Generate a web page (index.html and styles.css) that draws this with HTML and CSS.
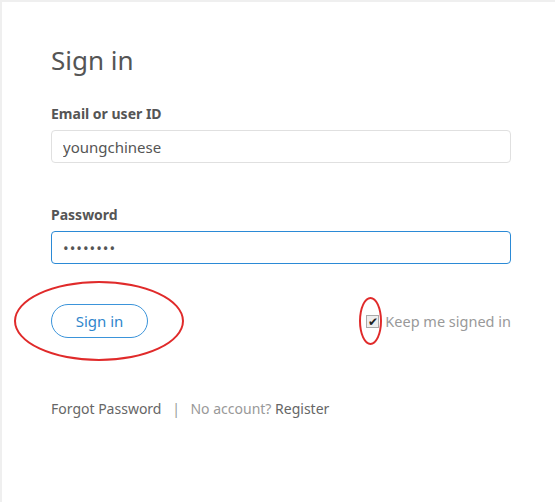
FILE: index.html
```html
<!DOCTYPE html>
<html lang="en">

<head>
    <meta charset="UTF-8">
    <meta name="viewport" content="width=device-width, initial-scale=1.0">
    <title>Sign in</title>
    <link rel="stylesheet" href="styles.css">
</head>

<body>
    <div class="card">
        <h1 class="title">Sign in</h1>

        <label class="field-label" for="user-id">Email or user ID</label>
        <input type="text" id="user-id" class="field" value="youngchinese">

        <label class="field-label" for="password">Password</label>
        <input type="password" id="password" class="field field-focus" value="password">

        <div class="actions">
            <div class="mark-wrap">
                <button class="signin-btn">Sign in</button>
                <span class="mark mark-btn"></span>
            </div>
            <label class="keep">
                <span class="mark-wrap">
                    <span class="keep-box">&#10004;</span>
                    <span class="mark mark-box"></span>
                </span>
                Keep me signed in
            </label>
        </div>

        <div class="links">
            <a href="#" class="link">Forgot Password</a>
            <span class="sep">|</span>
            <span class="muted">No account?</span>
            <a href="#" class="link">Register</a>
        </div>
    </div>
</body>

</html>
```

FILE: styles.css
```css
body {
    margin: 0;
    padding: 0;
    background-color: #efefef;
    font-family: 'Noto Sans', 'Open Sans', sans-serif;
    color: #555;
}

.card {
    background-color: white;
    margin: 2px 0 0 2px;
    min-height: 500px;
    padding: 38px 44px 0 49px;
    box-sizing: border-box;
}

.title {
    font-size: 26px;
    font-weight: normal;
    color: #555;
    margin: 0 0 24px 0;
    line-height: 40px;
}

.field-label {
    display: block;
    font-size: 14px;
    font-weight: bold;
    color: #555;
    line-height: 20px;
    margin-bottom: 6px;
}

.field {
    display: block;
    width: 100%;
    box-sizing: border-box;
    height: 33px;
    padding: 0 11px;
    border: 1px solid #e0e0e0;
    border-radius: 4px;
    font-family: inherit;
    font-size: 15px;
    color: #555;
    margin-bottom: 42px;
    outline: none;
}

.field-focus {
    border-color: #2b8ad6;
    margin-bottom: 40px;
    letter-spacing: 1px;
}

.actions {
    display: flex;
    justify-content: space-between;
    align-items: center;
}

.mark-wrap {
    position: relative;
    display: inline-block;
}

.signin-btn {
    display: block;
    width: 97px;
    height: 34px;
    border: 1px solid #3b94da;
    border-radius: 17px;
    background-color: white;
    color: #2f86cc;
    font-family: inherit;
    font-size: 15px;
    cursor: pointer;
}

.mark {
    position: absolute;
    border: 2.5px solid #e02a2a;
    border-radius: 50%;
    pointer-events: none;
}

.mark-btn {
    left: -37px;
    top: -23px;
    width: 166px;
    height: 76px;
}

.keep {
    display: flex;
    align-items: center;
    font-size: 14.5px;
    color: #999;
}

.keep-box {
    display: flex;
    align-items: center;
    justify-content: center;
    width: 11px;
    height: 11px;
    margin: 0 6px 0 0;
    border: 1px solid #aaa;
    background-color: #eee;
    color: #222;
    font-size: 12px;
    line-height: 11px;
}

.mark-box {
    left: -7px;
    top: -18px;
    width: 19px;
    height: 44px;
}

.links {
    margin-top: 61px;
    font-size: 14px;
}

.link {
    color: #666;
    text-decoration: none;
}

.sep {
    color: #999;
    margin: 0 7px;
}

.muted {
    color: #999;
}
```
